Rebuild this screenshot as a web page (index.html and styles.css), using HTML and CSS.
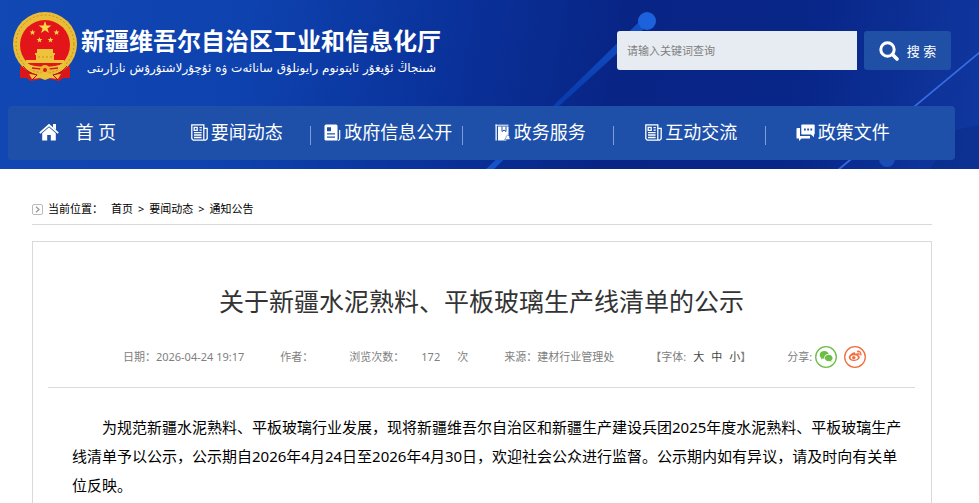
FILE: index.html
```html
<!DOCTYPE html>
<html lang="zh-CN">
<head>
<meta charset="utf-8">
<meta name="viewport" content="width=device-width, initial-scale=1">
<title>关于新疆水泥熟料、平板玻璃生产线清单的公示</title>
<link rel="stylesheet" href="styles.css">
</head>
<body>
<svg class="sprite" aria-hidden="true">
  <symbol id="news" viewBox="0 0 17 17">
    <path d="M.8.8h12v15.4H2.3L.8 14.7zM12.8 4.3h3.4v10.4l-1.5 1.5h-1.9M3 11h7.6M3 13.5h7.6M8.5 3.7h2.3M8.5 6.2h2.3M3 8.6h7.6" fill="none" stroke="currentColor" stroke-width="1.3"/>
    <path d="M3.2 3.4h3v3h-3z" fill="none" stroke="currentColor" stroke-width="1.3"/>
  </symbol>
</svg>
<header class="header">
  <svg class="header-art" viewBox="0 0 979 169" preserveAspectRatio="xMaxYMid slice" aria-hidden="true">
    <defs>
      <linearGradient id="beam" x1="0" y1="1" x2="1" y2="0">
        <stop offset="0" stop-color="#1656cc"/><stop offset=".5" stop-color="#0a3cae"/><stop offset="1" stop-color="#1450c4"/>
      </linearGradient>
    </defs>
    <path d="M484 171 553 106 639 22 645 28 559 106 492 171z" fill="url(#beam)"/>
    <circle cx="647" cy="21" r="9" fill="#1b62dc"/>
    <path d="M980 52 838 170" stroke="#376be0" stroke-width="1.8"/>
    <circle cx="887" cy="159" r="8" fill="#1c4cb6"/>
    <path d="M955 130 979 125V169H930z" fill="#082782" opacity=".4"/>
  </svg>
  <div class="masthead">
    <a class="brand" href="#">
      <svg class="emblem" viewBox="0 0 66 72" aria-hidden="true">
        <path d="M10 48 8 67l7 0 4 3 14-3 14 3 4-3h7l-2-19z" fill="#d8161c"/>
        <circle cx="33" cy="33" r="32" fill="#e9bd38"/>
        <circle cx="33" cy="33" r="29" fill="none" stroke="#c78e20" stroke-width="1" stroke-dasharray="2 2"/>
        <circle cx="33" cy="34" r="25" fill="#e3151b"/>
        <path d="m33 10 1.5 4.6h4.9l-4 2.8 1.6 4.7-4-2.9-4 2.9 1.6-4.7-4-2.8h4.9z" fill="#f9d94a"/>
        <g fill="#f9d94a">
          <path id="star" d="m20.500 18.500.7 2.100h2.200l-1.700 1.300.6 2.100-1.800-1.300-1.800 1.300.6-2.100-1.700-1.300h2.200z"/>
          <use href="#star" x="24"/><use href="#star" x="7" y="7.500"/><use href="#star" x="18" y="7.500"/>
        </g>
        <path d="M25 38h16v4H25zM23 42h20v2H23zM24 44h18v5H24zM14 49h38v3H14z" fill="#efc23c"/>
        <path d="M26 46h14" stroke="#c98f20" stroke-dasharray="2 2"/>
        <path d="M12 52q21 7 42 0l-3 6-12 1q-6-5-12 0l-12-1z" fill="#efc23c"/>
        <path d="M18 53q15 4 30 0M20 57l9 1M37 58l9-1" stroke="#d71d1c" stroke-width="1.500" fill="none"/>
        <path d="M8 55q6 8 17 9l-6 6-4-3H8zM58 55q-6 8-17 9l6 6 4-3h7z" fill="#d8161c"/>
        <circle cx="33" cy="59" r="5" fill="#e8b631"/><circle cx="33" cy="59" r="2" fill="#d71d1c"/>
        <path d="m17 63 9 1 7-3 7 3 9-1-3 5-8-1-5 2-5-2-8 1z" fill="#edc13c"/>
        <path d="M11 55q5 7 14 9l-5 5M55 55q-5 7-14 9l5 5" fill="none" stroke="#a90d16"/>
      </svg>
      <span class="brand-names">
        <span class="brand-zh">新疆维吾尔自治区工业和信息化厅</span>
        <span class="brand-ug" lang="ug" dir="rtl">شىنجاڭ ئۇيغۇر ئاپتونوم رايونلۇق سانائەت ۋە ئۇچۇرلاشتۇرۇش نازارىتى</span>
      </span>
    </a>
    <form class="search" role="search">
      <input class="search-input" type="search" aria-label="请输入关键词查询" placeholder="请输入关键词查询">
      <button class="search-button" type="button">
        <svg class="search-icon" viewBox="0 0 20 20" aria-hidden="true"><circle cx="8.500" cy="8.500" r="6.700" fill="none" stroke="#fff" stroke-width="3"/><path d="m13.500 13.500 4.500 4.500" stroke="#fff" stroke-width="3.600" stroke-linecap="round"/></svg>
        <span>搜 索</span>
      </button>
    </form>
  </div>
  <nav class="nav" aria-label="主导航">
    <a class="nav-item nav-home" href="#">
      <svg class="home-icon" viewBox="0 0 20 18" aria-hidden="true"><path d="M10 4.300 3.200 10.200V17.500H8.200V12h3.600v5.500h5V10.200z" fill="#fff"/><path d="M.8 10.200 10 2l9.200 8.200" fill="none" stroke="#fff" stroke-width="1.800"/><path d="M14 1h3v6l-3-2.600z" fill="#fff"/></svg>
      <span>首 页</span>
    </a>
    <a class="nav-item" href="#"><svg class="nav-icon" aria-hidden="true"><use href="#news"/></svg><span>要闻动态</span></a>
    <a class="nav-item" href="#"><svg class="nav-icon" viewBox="0 0 17 17" aria-hidden="true"><path fill-rule="evenodd" d="M2 .5h10q1.500 0 1.500 1.500v14.500H2Q.500 16.500.500 15V2Q.500.500 2 .500zM3 3.200v4h4v-4zM3 9.300v1.200h8V9.300zM3 12.600v1.200h8v-1.200z" fill="#fff"/><path d="M15.700 6v8.500q0 1.500-1.500 2" fill="none" stroke="#fff" stroke-width="1.200"/></svg><span>政府信息公开</span></a>
    <a class="nav-item" href="#"><svg class="nav-icon" viewBox="0 0 17 17" aria-hidden="true"><path d="M1.500.5h1.300v16H1.500zM4 2.500h10.500V11l-2 2.500v3H4z" fill="#fff"/><path d="M1.500 1.200h13" stroke="#fff"/><path d="M8 2.500v5l2-1.400 2 1.400v-5" fill="none" stroke="#2254ad"/><path d="M10.500 15.500 12 14v-1.500q2-3 3.500 0V14l1 1.500z" fill="#fff" stroke="#2254ad" stroke-width=".5"/></svg><span>政务服务</span></a>
    <a class="nav-item" href="#"><svg class="nav-icon" aria-hidden="true"><use href="#news"/></svg><span>互动交流</span></a>
    <a class="nav-item" href="#"><svg class="chat-icon" viewBox="0 0 19 17" aria-hidden="true"><path d="M1.500 4H4v8h10v2.500H5.500L3 17v-2.500H1Q.500 14.500.500 14V5q0-1 1-1z" fill="#fff"/><path fill-rule="evenodd" d="M6 .5h12q.7 0 .7.7v8.600q0 .7-.7.7v2.800l-3-2.800H6q-.7 0-.7-.7V1.200Q5.300.500 6 .500zM8 4.500v2h1.800v-2zm3.200 0v2H13v-2zm3.200 0v2h1.800v-2z" fill="#fff"/></svg><span>政策文件</span></a>
  </nav>
</header>
<main class="main">
  <nav class="crumbs" aria-label="当前位置">
    <svg class="crumb-icon" viewBox="0 0 11 11" aria-hidden="true"><rect x=".5" y=".5" width="10" height="10" rx="1.500" fill="#fff" stroke="#bbb"/><path d="m4 2.800 3 2.700-3 2.700" fill="none" stroke="#999" stroke-width="1.300"/></svg>
    <span class="crumb-label">当前位置：</span>
    <a href="#">首页</a><span>&gt;</span><a href="#">要闻动态</a><span>&gt;</span><a href="#">通知公告</a>
  </nav>
  <article class="article">
    <h1 class="title">关于新疆水泥熟料、平板玻璃生产线清单的公示</h1>
    <div class="meta">
      <span>日期：<time datetime="2026-04-24T19:17">2026-04-24 19:17</time></span>
      <span>作者：</span>
      <span class="views"><span>浏览次数：</span><span>172</span><span>次</span></span>
      <span>来源：建材行业管理处</span>
      <span class="sizes"><span>【字体:</span><button type="button">大</button><button type="button">中</button><span><button type="button">小</button>】</span></span>
      <span class="share">
        <span>分享:</span>
        <a href="#" aria-label="微信"><svg viewBox="0 0 22 22" aria-hidden="true"><circle cx="11" cy="11" r="10.300" fill="#fff" stroke="#6cbe45" stroke-width="1.300"/><path d="M9.300 5C6.700 5 4.700 6.700 4.700 8.900c0 1.200.6 2.200 1.600 3l-.4 1.500 1.700-.9 1.700.3C9 9.700 11 7.900 13.700 8 13.200 6.200 11.400 5 9.300 5z" fill="#6cbe45"/><path d="M13.700 8.700c-2.200 0-3.900 1.500-3.900 3.300s1.700 3.300 3.900 3.300l1.300-.2 1.500.8-.4-1.300c.9-.6 1.500-1.500 1.500-2.600 0-1.800-1.700-3.300-3.900-3.300z" fill="#6cbe45"/></svg></a>
        <a href="#" aria-label="微博"><svg viewBox="0 0 22 22" aria-hidden="true"><circle cx="11" cy="11" r="10.300" fill="#fff" stroke="#f26d3d" stroke-width="1.300"/><path d="M9.500 6.500c1.200-.5 2 .1 1.700 1.300 1.700-.7 3.300-.3 2.900 1.400 1 .3 1.700 1 1.700 1.900 0 2.200-2.600 3.900-5.500 3.900-3.100 0-5.500-1.400-5.500-3.700 0-1.700 2.500-4.100 4.700-4.800z" fill="#f26d3d"/><ellipse cx="10.200" cy="11.500" rx="3.600" ry="2.200" fill="#fff"/><circle cx="9.800" cy="11.600" r="1.700" fill="#f26d3d"/><path d="M13.300 7.200q2-.1 1.800 2M13.100 5.300q4.200-.4 3.800 4.200" fill="none" stroke="#f26d3d" stroke-width="1.300"/></svg></a>
      </span>
    </div>
    <p class="body">为规范新疆水泥熟料、平板玻璃行业发展，现将新疆维吾尔自治区和新疆生产建设兵团2025年度水泥熟料、平板玻璃生产线清单予以公示，公示期自2026年4月24日至2026年4月30日，欢迎社会公众进行监督。公示期内如有异议，请及时向有关单位反映。</p>
  </article>
</main>
</body>
</html>
```
FILE: styles.css
```css
* { box-sizing: border-box; }

body {
  margin: 0;
  min-height: 100vh;
  display: flex;
  flex-direction: column;
  background: #fff;
  color: #000;
  font-family: "Noto Sans", "Noto Sans CJK SC", sans-serif;
  font-size: 11px;
  line-height: 16px;
}

a { color: inherit; text-decoration: none; }

button {
  padding: 0;
  border: 0;
  background: none;
  color: inherit;
  font: inherit;
  cursor: pointer;
}

svg { display: block; flex: none; }

.sprite { position: absolute; width: 0; height: 0; }

/* Header */
.header {
  position: relative;
  padding: 0 24px 9px 8px;
  background: linear-gradient(100deg, #1248b4 0%, #0e42ae 25%, #0a329b 45%, #082586 62%, #082588 80%, #1038a0 100%);
  color: #fff;
}

.header-art {
  position: absolute;
  inset: 0;
  width: 100%;
  height: 100%;
}

.masthead {
  position: relative;
  display: flex;
  justify-content: space-between;
  align-items: flex-start;
  height: 106px;
  padding: 0 4px;
}

.brand { display: flex; gap: 3px; padding-top: 11px; }

.emblem { width: 66px; height: 72px; }

.brand-names { display: flex; flex-direction: column; padding-top: 14px; }

.brand-zh { font-size: 24px; font-weight: 700; line-height: 32px; }

.brand-ug {
  padding-right: 5px;
  font-family: "DejaVu Sans", sans-serif;
  font-size: 12px;
  line-height: 22px;
  white-space: nowrap;
}

.search { display: flex; gap: 7px; padding-top: 31px; }

.search-input {
  width: 240px;
  height: 39px;
  padding: 0 10px;
  border: 0;
  border-radius: 3px 0 0 3px;
  background: #e7ecf2;
  color: #333;
  font: inherit;
}

.search-input::placeholder { color: #808080; opacity: 1; }

.search-button {
  display: flex;
  align-items: center;
  justify-content: center;
  gap: 8px;
  width: 87px;
  height: 39px;
  border-radius: 3px;
  background: #2050a6;
  font-size: 13px;
}

.search-icon { width: 20px; height: 20px; }

.nav {
  position: relative;
  display: grid;
  grid-template-columns: repeat(6, 1fr);
  height: 54px;
  padding-right: 38px;
  border-radius: 4px;
  background: #1e50aa;
}

.nav-item {
  position: relative;
  display: flex;
  align-items: center;
  justify-content: center;
  gap: 3px;
  padding: 0 0 2px 3px;
  font-size: 18px;
  line-height: 24px;
  white-space: nowrap;
}

.nav-home { gap: 16px; padding: 0 12px 2px 0; }

.nav-item:nth-child(n+2):nth-child(-n+5)::after {
  content: "";
  position: absolute;
  top: 20px;
  right: 0;
  width: 1px;
  height: 19px;
  background: #7d9ddb;
}

.nav-icon { width: 17px; height: 17px; }
.home-icon { width: 20px; height: 18px; }
.chat-icon { width: 19px; height: 17px; }

/* Page content */
.main {
  flex: 1;
  display: flex;
  flex-direction: column;
  padding: 32px 47px 0 32px;
}

.crumbs {
  display: flex;
  align-items: center;
  gap: 5px;
  padding-bottom: 7px;
  border-bottom: 1px solid #d9d9d9;
}

.crumb-icon { width: 11px; height: 11px; }
.crumb-label { margin-right: 3px; }

.article {
  flex: 1;
  margin-top: 16px;
  padding: 0 16px 0 15px;
  border: 1px solid #d9d9d9;
  border-bottom: 0;
}

.title {
  margin: 0;
  padding-top: 41px;
  color: #333;
  font-size: 25px;
  font-weight: 400;
  line-height: 36px;
  text-align: center;
}

.meta {
  display: flex;
  align-items: center;
  justify-content: center;
  gap: 36px;
  margin-top: 26px;
  padding: 0 0 18px 26px;
  border-bottom: 1px solid #d9d9d9;
  color: #808080;
  line-height: 24px;
  white-space: nowrap;
}

.views { display: flex; gap: 17px; }
.sizes { display: flex; gap: 7px; }
.sizes button { color: #444; }
.share { display: flex; align-items: center; gap: 7px; }
.share > span { margin-right: -4px; }
.share svg { width: 22px; height: 22px; }

.body {
  margin: 0;
  padding: 25px 8px 0 24px;
  font-size: 15px;
  line-height: 29px;
  text-indent: 2em;
}
```
